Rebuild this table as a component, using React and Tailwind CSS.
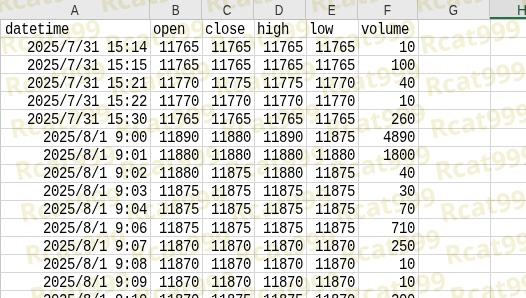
import React from 'react';

const columns = ['A', 'B', 'C', 'D', 'E', 'F', 'G', 'H'];

const rows = [
  ['datetime', 'open', 'close', 'high', 'low', 'volume'],
  ['2025/7/31 15:14', '11765', '11765', '11765', '11765', '10'],
  ['2025/7/31 15:15', '11765', '11765', '11765', '11765', '100'],
  ['2025/7/31 15:21', '11770', '11775', '11775', '11770', '40'],
  ['2025/7/31 15:22', '11770', '11770', '11770', '11770', '10'],
  ['2025/7/31 15:30', '11765', '11765', '11765', '11765', '260'],
  ['2025/8/1 9:00', '11890', '11880', '11890', '11875', '4890'],
  ['2025/8/1 9:01', '11880', '11880', '11880', '11880', '1800'],
  ['2025/8/1 9:02', '11880', '11875', '11880', '11875', '40'],
  ['2025/8/1 9:03', '11875', '11875', '11875', '11875', '30'],
  ['2025/8/1 9:04', '11875', '11875', '11875', '11875', '70'],
  ['2025/8/1 9:06', '11875', '11875', '11875', '11875', '710'],
  ['2025/8/1 9:07', '11870', '11870', '11870', '11870', '250'],
  ['2025/8/1 9:08', '11870', '11870', '11870', '11870', '10'],
  ['2025/8/1 9:09', '11870', '11870', '11870', '11870', '10'],
  ['2025/8/1 9:10', '11870', '11875', '11875', '11870', '200'],
];

const gridCols = 'grid grid-cols-[150px_52px_52px_52px_52px_60px_72px_64px]';

// watermark tiles: rows every 42px, each row nudged right a little
const marks = [];
for (let r = -1; r < 8; r++) {
  for (let c = -4; c < 2; c++) {
    marks.push({ key: `${r}-${c}`, left: 420 + c * 105 + r * 5, top: 32 + r * 42 });
  }
}

const App = () => {
  return (
    <div className="relative w-[526px] h-[298px] overflow-hidden bg-white font-['Liberation_Mono',monospace] text-black">
      {/* column letters */}
      <div className={`${gridCols} h-[20px] bg-[#e9e9e9] border-b border-[#bdbdbd]`}>
        {columns.map((col) =>
          col === 'H' ? (
            <div key={col} className="flex items-center justify-center bg-[#dedede] border-b-2 border-[#217346] font-['Liberation_Sans',sans-serif] text-[14px] text-[#1d5e3a] leading-none pt-[2px]">
              {col}
            </div>
          ) : (
            <div key={col} className="flex items-center justify-center border-r border-[#c6c6c6] font-['Liberation_Sans',sans-serif] text-[14px] text-[#333] leading-none pt-[1px]">
              <span className="inline-block scale-x-[0.85]">{col}</span>
            </div>
          )
        )}
      </div>

      {/* cells */}
      <div className="border-l border-[#c8c8c8]">
        {rows.map((row, i) => (
          <div key={i} className={`${gridCols} h-[18.1px]`}>
            {columns.map((col, j) => {
              const value = row[j] || '';
              const isHead = i === 0;
              return (
                <div
                  key={col}
                  className={`flex items-center overflow-hidden whitespace-nowrap border-r border-b border-[#d6d6d6] text-[14px] tracking-[-0.4px] leading-none ${
                    isHead ? (j === 0 ? 'justify-start pl-[4px]' : 'justify-start pl-[2px]') : 'justify-end pr-[3px]'
                  }`}
                >
                  <span className="inline-block scale-y-[1.22]">{value}</span>
                </div>
              );
            })}
          </div>
        ))}
      </div>

      {/* Rcat999 watermark */}
      <div className="absolute inset-0 pointer-events-none mix-blend-multiply">
        {marks.map((m) => (
          <span
            key={m.key}
            className="absolute font-['Noto_Sans',sans-serif] font-bold text-[26px] leading-none text-[#f4f2d6] -rotate-[10deg] origin-left whitespace-nowrap"
            style={{ left: m.left, top: m.top }}
          >
            Rcat999
          </span>
        ))}
      </div>
    </div>
  );
};

export default App;
